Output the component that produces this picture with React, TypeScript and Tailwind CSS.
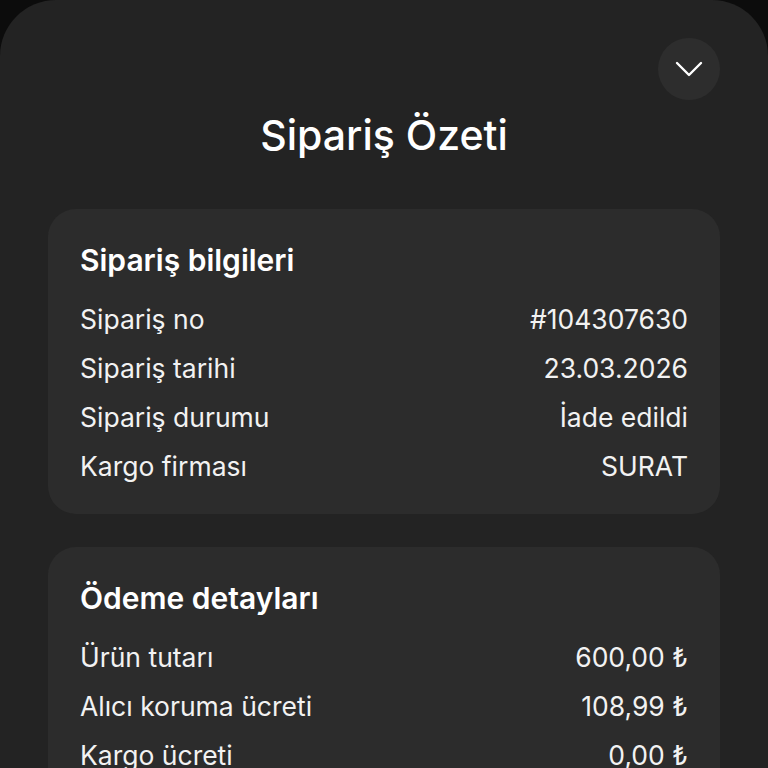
import React from 'react';

const orderInfo = [
  { label: 'Sipariş no', value: '#104307630' },
  { label: 'Sipariş tarihi', value: '23.03.2026' },
  { label: 'Sipariş durumu', value: 'İade edildi' },
  { label: 'Kargo firması', value: 'SURAT' },
];

const payment = [
  { label: 'Ürün tutarı', value: '600,00 ₺' },
  { label: 'Alıcı koruma ücreti', value: '108,99 ₺' },
  { label: 'Kargo ücreti', value: '0,00 ₺' },
];

function Card({ title, rows }: { title: string; rows: { label: string; value: string }[] }) {
  return (
    <div className="bg-[#2c2c2c] rounded-[28px] px-8 pt-[31px] pb-[23px]">
      <h2 className="text-[30px] font-semibold leading-[40px] text-white mb-[15px]">{title}</h2>
      <div className="flex flex-col">
        {rows.map((r) => (
          <div key={r.label} className="flex items-center justify-between h-[49px] text-[26.5px] text-[#f2f2f2]">
            <span>{r.label}</span>
            <span>{r.value}</span>
          </div>
        ))}
      </div>
    </div>
  );
}

export default function App() {
  return (
    <div className="w-[768px] h-[768px] bg-[#0c0c0c] overflow-hidden" style={{ fontFamily: 'Inter, "Noto Sans", sans-serif' }}>
      <div className="bg-[#232323] rounded-t-[56px] h-full px-12 pt-[38px]">
        <div className="flex justify-end">
          <button className="w-[62px] h-[62px] rounded-full bg-[#2d2d2d] flex items-center justify-center">
            <svg width="28" height="16" viewBox="0 0 28 16" fill="none">
              <path d="M2 2l12 12L26 2" stroke="white" strokeWidth="2.4" strokeLinecap="round" strokeLinejoin="round" />
            </svg>
          </button>
        </div>
        <h1 className="text-center text-white text-[41px] font-medium leading-[50px] mt-[10px] mb-[49px]">Sipariş Özeti</h1>
        <div className="flex flex-col gap-[33px]">
          <Card title="Sipariş bilgileri" rows={orderInfo} />
          <Card title="Ödeme detayları" rows={payment} />
        </div>
      </div>
    </div>
  );
}
